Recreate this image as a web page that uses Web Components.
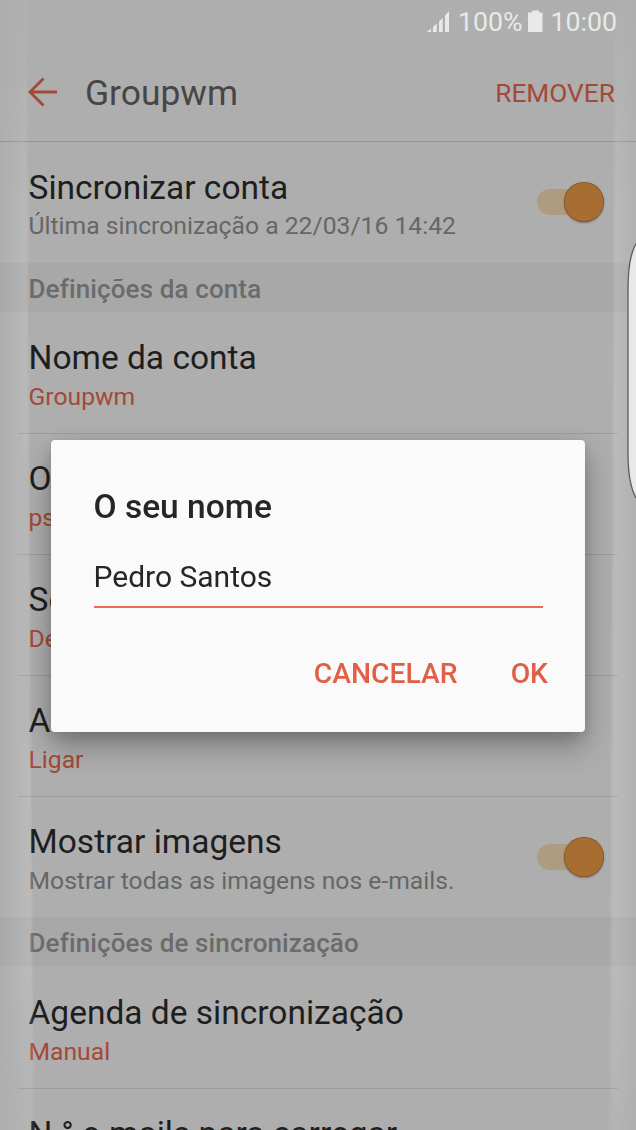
<!DOCTYPE html>
<html lang="pt">
<head>
<meta charset="utf-8">
<title>Groupwm</title>
<style>
html,body{margin:0;height:100%;overflow:hidden;background:#aeaeae}
body{font-family:Roboto,"Noto Sans",sans-serif}
</style>
</head>
<body>
<phone-screen>
  <status-bar level="100%" time="10:00"></status-bar>
  <app-bar heading="Groupwm" action="REMOVER"></app-bar>
  <setting-row heading="Sincronizar conta" note="Última sincronização a 22/03/16 14:42" plain first><toggle-switch slot="end"></toggle-switch></setting-row>
  <section-header><span>Definições da conta</span></section-header>
  <setting-row heading="Nome da conta" value="Groupwm"></setting-row>
  <setting-row heading="O" value="ps"></setting-row>
  <setting-row heading="Se" value="De"></setting-row>
  <setting-row heading="Assinatura" value="Ligar"></setting-row>
  <setting-row heading="Mostrar imagens" note="Mostrar todas as imagens nos e-mails." plain><toggle-switch slot="end"></toggle-switch></setting-row>
  <section-header last><span>Definições de sincronização</span></section-header>
  <setting-row heading="Agenda de sincronização" value="Manual"></setting-row>
  <setting-row heading="N.° e-mails para carregar"></setting-row>
  <edge-glow slot="over"></edge-glow>
  <name-dialog slot="over" heading="O seu nome" value="Pedro Santos">
    <dialog-button>CANCELAR</dialog-button>
    <dialog-button>OK</dialog-button>
  </name-dialog>
</phone-screen>
<script>
class Base extends HTMLElement {
  constructor(){ super(); this.attachShadow({mode:'open'}); }
  connectedCallback(){ this.shadowRoot.innerHTML = this.render(); }
  a(n){ return this.getAttribute(n) || ''; }
}
customElements.define('phone-screen', class extends Base {
  render(){ return `<style>
    :host{display:block;position:relative;width:636px;height:1130px;overflow:hidden;background:#aeaeae}
    main{display:flex;flex-direction:column}
    </style><main><slot></slot></main><slot name="over"></slot>`; }
});
customElements.define('status-bar', class extends Base {
  render(){ return `<style>
    :host{display:flex;flex:none;height:44px;box-sizing:border-box;justify-content:flex-end;padding-right:19px;color:#e9e9e9;font-size:26.700px;line-height:44px}
    svg{display:block;flex:none}
    .sig{margin:11px 8px 0 0}.bat{margin:10px 8px 0 5px}
    </style>
    <svg class="sig" width="23" height="22" viewBox="0 0 23 22" fill="#e9e9e9"><path d="M0 21 4 17.600V21ZM6 16 9.700 12.500V21H6ZM12 10.500 15.700 6.800V21H12ZM18 4.500 22 0V21H18Z"/></svg>
    <span>${this.a('level')}</span>
    <svg class="bat" width="15" height="23" viewBox="0 0 15 23" fill="#e9e9e9"><path d="M4 .5h7v2h3.500v19.500H0V2.500h4Z"/></svg>
    <span>${this.a('time')}</span>`; }
});
customElements.define('app-bar', class extends Base {
  render(){ return `<style>
    :host{display:flex;flex:none;height:98px;box-sizing:border-box;padding:0 21px 0 28px;border-bottom:1px solid #959595}
    svg{display:block;margin:33px 28px 0 0}
    h1{margin:0;flex:1;font-size:35.400px;font-weight:400;line-height:42px;padding-top:28px;color:#464646}
    b{font-weight:400;font-size:26.300px;line-height:30px;padding-top:34px;color:#a34937}
    </style>
    <svg width="29" height="30" viewBox="0 0 29 30" fill="none" stroke="#a34937" stroke-width="2.800"><path d="M15.500 1.500 2 15 15.500 28.500M2 15H29"/></svg>
    <h1>${this.a('heading')}</h1><b>${this.a('action')}</b>`; }
});
customElements.define('setting-row', class extends Base {
  render(){ return `<style>
    :host{display:flex;flex:none;height:121px;box-sizing:border-box;margin:0 18px;padding:25.500px 14px 0 10.500px;box-shadow:0 1px #9b9b9b}
    :host([plain]){box-shadow:none}
    div{flex:1;white-space:nowrap}
    h2{margin:0;font-size:33.500px;font-weight:400;line-height:40px;color:#1e1e1e}
    p{margin:4px 0 0;font-size:24.700px;line-height:30px;color:#a34937}
    :host([first]) p{margin-top:3px}
    :host(:not([first])) ::slotted(*){margin-top:15.500px}
    p.n{color:#666}
    </style><div><h2>${this.a('heading')}</h2>
    ${this.a('value')?`<p>${this.a('value')}</p>`:''}${this.a('note')?`<p class="n">${this.a('note')}</p>`:''}</div>
    <slot name="end"></slot>`; }
});
customElements.define('section-header', class extends Base {
  render(){ return `<style>
    :host{display:block;flex:none;height:49px;box-sizing:border-box;padding:11px 28.500px 0;background:#a8a8a8;color:#6b6b6b;font-size:26px;font-weight:500;line-height:30px;letter-spacing:.12px}
    :host([last]){margin-bottom:1px}
    </style><slot></slot>`; }
});
customElements.define('toggle-switch', class extends Base {
  render(){ return `<style>
    :host{display:flex;align-items:center;width:67px;height:40px;margin-top:14.500px;flex:none}
    .track{flex:1;height:26px;border-radius:13px 0 0 13px;background:#ae9b80;margin-right:-20px}
    .knob{flex:none;width:40px;height:40px;border-radius:50%;background:#a86d31;box-shadow:inset 0 0 0 .7px #80562b,0 1px 2px #4448}
    </style><span class="track"></span><span class="knob"></span>`; }
});
customElements.define('edge-glow', class extends Base {
  render(){ return `<style>
    :host{display:block;position:absolute;inset:0}
    svg{display:block}
    </style><svg width="636" height="1130" viewBox="0 0 636 1130">
    <defs>
      <linearGradient id="l" gradientUnits="userSpaceOnUse" x1="0" x2="30" y1="0" y2="0"><stop offset="0" stop-color="#fff" stop-opacity="0"/><stop offset=".45" stop-color="#fff" stop-opacity=".07"/><stop offset="1" stop-color="#fff" stop-opacity=".16"/></linearGradient>
      <linearGradient id="r" gradientUnits="userSpaceOnUse" x1="610" x2="636" y1="0" y2="0"><stop offset="0" stop-color="#fff" stop-opacity=".1"/><stop offset=".2" stop-color="#fff" stop-opacity=".16"/><stop offset="1" stop-color="#fff" stop-opacity=".04"/></linearGradient>
      <linearGradient id="v" x1="0" x2="0" y1="0" y2="1"><stop offset="0" stop-color="#fff" stop-opacity=".2"/><stop offset=".2" stop-color="#fff"/><stop offset=".85" stop-color="#fff"/><stop offset="1" stop-color="#fff" stop-opacity=".5"/></linearGradient>
      <mask id="m"><rect width="636" height="1130" fill="url(#v)"/></mask>
      <filter id="s" x="-50%" width="200%"><feGaussianBlur stdDeviation="1 0"/></filter>
    </defs>
    <g mask="url(#m)"><path filter="url(#s)" fill="url(#l)" d="M0 0H27L28 300 31 800 34 1130H0Z"/><path filter="url(#s)" fill="url(#r)" d="M640 0H615L613 400 611 800 609 1130H640Z"/></g>
    <path d="M640 239C632 246 628 262 628 290V453C628 480 632 495 640 503Z" fill="#e8e8e8" stroke="#5c5c5c" stroke-width="1.300"/>
    </svg>`; }
});
customElements.define('name-dialog', class extends Base {
  render(){ return `<style>
    :host{display:flex;flex-direction:column;position:absolute;left:51px;top:440px;width:534px;height:292px;box-sizing:border-box;padding:47px 37px 0 42.500px;border-radius:4px;background:#fafafa;color:#262626;box-shadow:0 0 1px #777,0 14px 30px rgba(0,0,0,.3),0 5px 14px rgba(0,0,0,.12)}
    h3{margin:0;font-size:33.500px;font-weight:500;line-height:40px}
    .field{margin:13px 5.500px 0 0;height:68px;box-sizing:border-box;padding-top:19px;font-size:30px;line-height:36px;border-bottom:2px solid #ed6a52}
    footer{display:flex;justify-content:flex-end;gap:53px;margin-top:49px}
    </style><h3>${this.a('heading')}</h3><div class="field">${this.a('value')}</div><footer><slot></slot></footer>`; }
});
customElements.define('dialog-button', class extends Base {
  render(){ return `<style>
    :host{display:block;font-size:28.300px;font-weight:500;line-height:34px;color:#e05f46}
    </style><slot></slot>`; }
});
</script>
</body>
</html>
